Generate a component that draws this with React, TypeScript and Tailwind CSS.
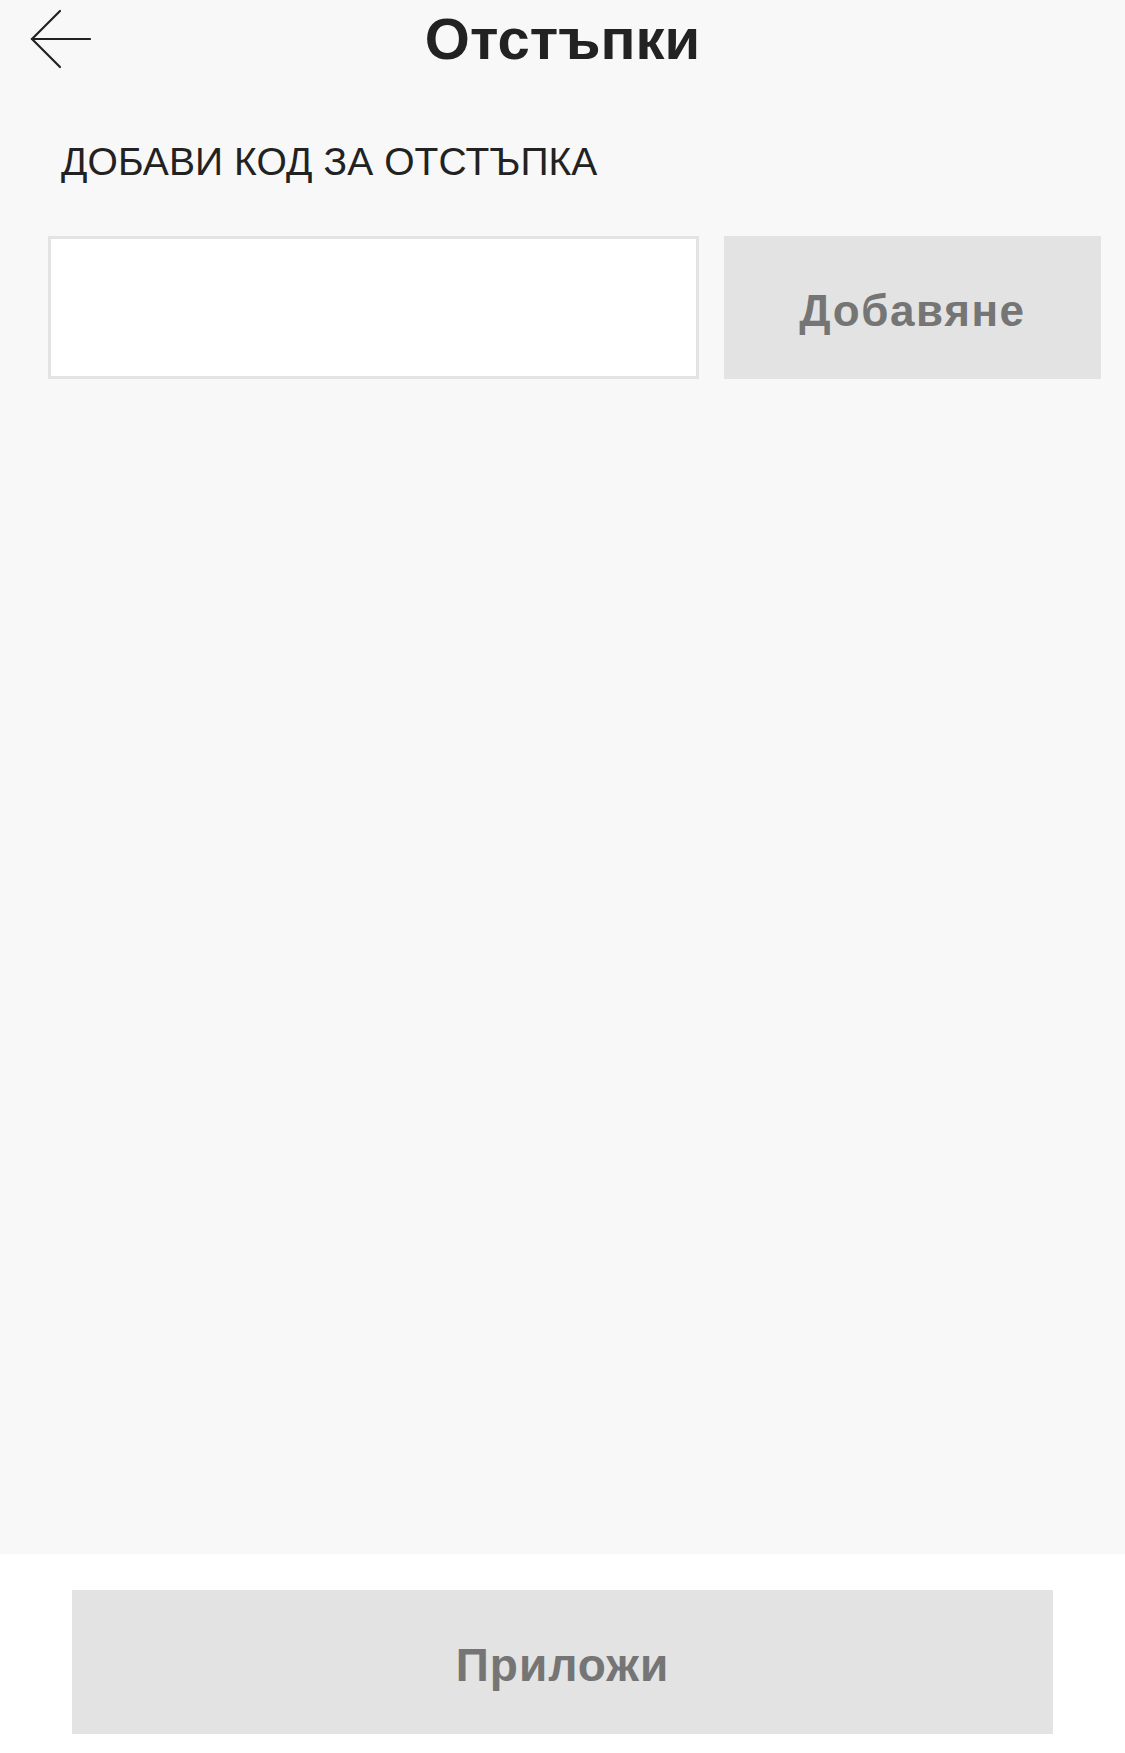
const BackArrow = () => (
  <svg width="62" height="62" viewBox="0 0 62 62" fill="none" stroke="#222" strokeWidth="2.2" strokeLinecap="round">
    <path d="M3 31h58" />
    <path d="M31 3L3 31l28 28" />
  </svg>
)

export default function App() {
  return (
    <div className="flex h-[1753px] w-full flex-col bg-[#f8f8f8] font-['Liberation_Sans',Arial,sans-serif]">
      <header className="grid h-[78px] grid-cols-[1fr_auto_1fr] items-center">
        <button type="button" className="ml-[29px] flex w-fit items-center">
          <BackArrow />
        </button>
        <h1 className="text-[58px] font-bold leading-none text-[#222]">Отстъпки</h1>
        <span />
      </header>

      <main className="flex flex-1 flex-col pl-[48px] pr-[24px]">
        <p className="ml-[13px] mt-[64px] text-[39px] leading-none tracking-[0.1px] text-[#222]">
          ДОБАВИ КОД ЗА ОТСТЪПКА
        </p>
        <div className="mt-[55px] flex h-[143px] gap-[25px]">
          <input
            type="text"
            className="h-full w-[651px] border-[3px] border-[#e3e3e3] bg-white px-4 text-[40px] outline-none"
          />
          <button
            type="button"
            className="flex h-full flex-1 items-center justify-center bg-[#e3e3e3] pt-[6px] text-[44px] font-bold tracking-[1.6px] text-[#757575]"
          >
            Добавяне
          </button>
        </div>
      </main>

      <footer className="flex h-[199px] items-start bg-white px-[72px] pt-[36px]">
        <button
          type="button"
          className="flex h-[144px] w-full items-center justify-center bg-[#e3e3e3] pt-[6px] text-[46px] font-bold tracking-[1px] text-[#757575]"
        >
          Приложи
        </button>
      </footer>
    </div>
  )
}
